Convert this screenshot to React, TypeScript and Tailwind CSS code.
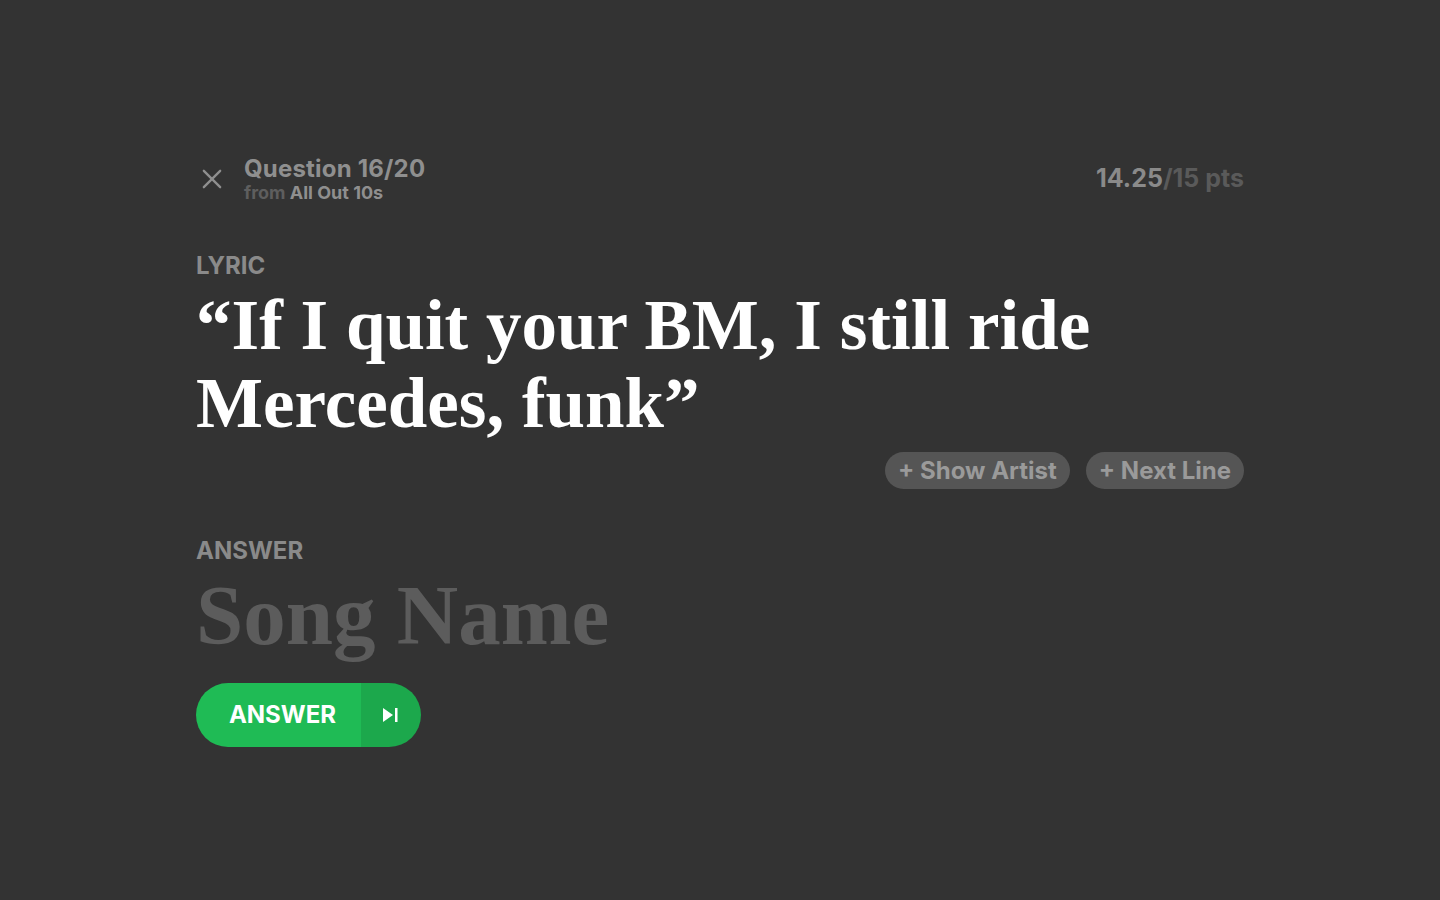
import React from "react";

const sans = { fontFamily: "Inter, 'Liberation Sans', sans-serif" };
const serif = { fontFamily: "'Liberation Serif', 'DejaVu Serif', serif" };

export default function App() {
  return (
    <div className="min-h-screen w-full bg-[#333333]" style={sans}>
      <div className="mx-auto w-[1048px] pt-[155px]">
        <div className="flex items-center justify-between">
          <div className="flex items-center gap-[18px]">
            <svg width="28" height="28" viewBox="0 0 24 24" fill="none" stroke="#8f8f8f" strokeWidth="2" strokeLinecap="round" className="ml-[2px]">
              <path d="M5 5 L19 19 M19 5 L5 19" />
            </svg>
            <div className="flex flex-col">
              <div className="text-[24px] font-bold leading-[28px] tracking-[0.2px] text-[#8f8f8f]">Question 16/20</div>
              <div className="text-[18px] font-bold leading-[20px] text-[#5e5e5e]">
                from <span className="text-[#8f8f8f]">All Out 10s</span>
              </div>
            </div>
          </div>
          <div className="text-[25px] font-bold text-[#8a8a8a]">
            14.25<span className="text-[#5a5a5a]">/15 pts</span>
          </div>
        </div>

        <div className="mt-[49px] text-[24px] font-bold leading-[28px] text-[#8a8a8a]">LYRIC</div>
        <div className="mt-[6px] text-[71px] font-bold leading-[78px] text-white" style={serif}>
          “If I quit your BM, I still ride Mercedes, funk”
        </div>
        <div className="mt-[10px] flex justify-end gap-[16px]">
          <div className="flex h-[37px] items-center rounded-full bg-[#555555] px-[13px] text-[24px] font-bold text-[#9a9a9a]">+ Show Artist</div>
          <div className="flex h-[37px] items-center rounded-full bg-[#555555] px-[13px] text-[24px] font-bold text-[#9a9a9a]">+ Next Line</div>
        </div>

        <div className="mt-[48px] text-[24px] font-bold leading-[28px] text-[#8a8a8a]">ANSWER</div>
        <div className="mt-[6px] text-[85px] font-bold leading-[88px] text-[#5c5c5c]" style={serif}>
          Song Name
        </div>

        <div className="mt-[24px] flex h-[64px] w-[225px] overflow-hidden rounded-full">
          <div className="flex w-[165px] items-center justify-center bg-[#1fbb55] pl-[8px] text-[24px] font-bold text-white">ANSWER</div>
          <div className="flex flex-1 items-center justify-center bg-[#1ca84c]">
            <svg width="20" height="20" viewBox="0 0 20 20" className="mr-[2px]">
              <path d="M3 3 L13 10 L3 17 Z" fill="white" />
              <rect x="15" y="3" width="2.5" height="14" fill="white" />
            </svg>
          </div>
        </div>
      </div>
    </div>
  );
}
